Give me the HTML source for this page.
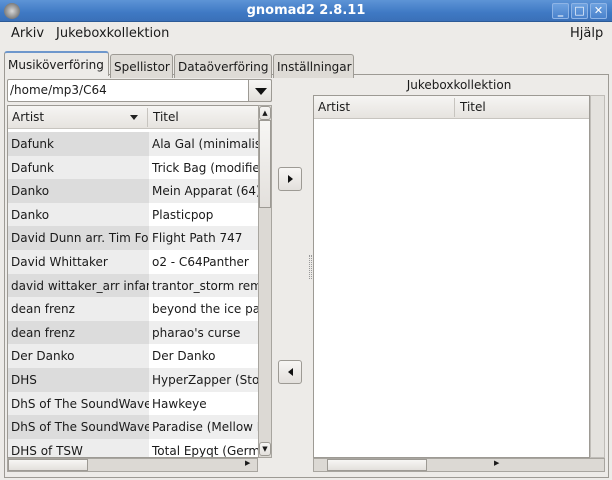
<!DOCTYPE html>
<html><head><meta charset="utf-8"><style>
*{box-sizing:border-box;margin:0;padding:0}
body{width:612px;height:480px;overflow:hidden;background:#edebe8;font-family:"DejaVu Sans","Liberation Sans",sans-serif;font-size:12px;color:#1a1a1a;position:relative}
.a{position:absolute}
.title{left:0;top:0;width:612px;height:22px;background:linear-gradient(#5d94d6,#3f79c4 60%,#3a70b8);border-bottom:1px solid #2c5a96}
.title .t{left:0;width:612px;top:3px;text-align:center;color:#fff;font-weight:bold;font-size:13px}
.wb{top:3px;width:17px;height:16px;border:1px solid #8eb4e6;border-radius:2px;background:linear-gradient(#6ea2e0,#4a82cc);color:#fff;font-weight:bold;font-size:11px;text-align:center;line-height:14px}
.tab{height:24px;border:1px solid #9d9a94;border-bottom:none;border-radius:3px 3px 0 0;background:#dedbd6;padding:5px 3px 0 3px;font-size:12px}
.list{background:#fff;border:1px solid #9d9a94}
.hdr{height:23px;background:linear-gradient(#f6f5f3,#e6e3df);border-bottom:1px solid #c7c4bf}
.row{height:23.6px;position:absolute;left:0;width:251px;line-height:24px}
.row span{position:absolute;top:0;height:100%;padding-left:3px;white-space:nowrap;overflow:hidden}
.c1{left:0;width:141px}.c2{left:141px;width:110px}
.vs{background:#dcd9d4;border:1px solid #a8a59f}
.btn{background:linear-gradient(#f7f6f4,#e3e0dc);border:1px solid #9d9a94;border-radius:3px}
</style></head><body>
<div class="a title">
 <div class="a" style="left:4px;top:3px;width:16px;height:16px;border-radius:50%;background:radial-gradient(#d8d8d8,#555);"></div>
 <div class="a t">gnomad2 2.8.11</div>
 <div class="a wb" style="left:552px">_</div>
 <div class="a wb" style="left:571px">□</div>
 <div class="a wb" style="left:590px">✕</div>
</div>
<div class="a" style="left:11px;top:26px;font-size:13px">Arkiv</div>
<div class="a" style="left:56px;top:26px;font-size:13px">Jukeboxkollektion</div>
<div class="a" style="left:570px;top:26px;font-size:13px">Hjälp</div>

<div class="a" style="left:4px;top:74px;width:605px;height:404px;border:1px solid #9d9a94;background:#edebe8"></div>
<div class="a tab" style="left:4px;top:51px;width:105px;height:25px;background:#edebe8;border-top:2px solid #6e97cc">Musiköverföring</div>
<div class="a tab" style="left:110px;top:54px;width:63px">Spellistor</div>
<div class="a tab" style="left:174px;top:54px;width:98px">Dataöverföring</div>
<div class="a tab" style="left:273px;top:54px;width:81px">Inställningar</div>

<div class="a" style="left:7px;top:79px;width:265px;height:23px;background:#fff;border:1px solid #9d9a94;border-radius:2px;padding:3px 2px;font-size:12px">/home/mp3/C64</div>
<div class="a btn" style="left:248px;top:79px;width:24px;height:23px;border-radius:0 2px 2px 0"><div class="a" style="left:6px;top:8px;border-left:6px solid transparent;border-right:6px solid transparent;border-top:7px solid #111"></div></div>

<div class="a list" style="left:7px;top:105px;width:252px;height:353px;overflow:hidden">
 <div class="a hdr" style="left:0;top:0;width:251px"></div>
 <div class="a" style="left:4px;top:4px">Artist</div>
 <div class="a" style="left:122px;top:9px;border-left:4px solid transparent;border-right:4px solid transparent;border-top:5px solid #222"></div>
 <div class="a" style="left:139px;top:2px;width:1px;height:19px;background:#c7c4bf"></div>
 <div class="a" style="left:145px;top:4px">Titel</div>
 <div class="a" style="left:0;top:26px;width:251px;height:330px">
  <div class="row" style="top:0"><span class="c1" style="background:#dcdcdc">Dafunk</span><span class="c2" style="background:#eeeeee">Ala Gal (minimalistic)</span></div>
  <div class="row" style="top:23.6px"><span class="c1" style="background:#ededed">Dafunk</span><span class="c2">Trick Bag (modified)</span></div>
  <div class="row" style="top:47.2px"><span class="c1" style="background:#dcdcdc">Danko</span><span class="c2" style="background:#eeeeee">Mein Apparat (64)</span></div>
  <div class="row" style="top:70.8px"><span class="c1" style="background:#ededed">Danko</span><span class="c2">Plasticpop</span></div>
  <div class="row" style="top:94.4px"><span class="c1" style="background:#dcdcdc">David Dunn arr. Tim Follin</span><span class="c2" style="background:#eeeeee">Flight Path 747</span></div>
  <div class="row" style="top:118px"><span class="c1" style="background:#ededed">David Whittaker</span><span class="c2">o2 - C64Panther</span></div>
  <div class="row" style="top:141.6px"><span class="c1" style="background:#dcdcdc">david wittaker_arr infan</span><span class="c2" style="background:#eeeeee">trantor_storm remix</span></div>
  <div class="row" style="top:165.2px"><span class="c1" style="background:#ededed">dean frenz</span><span class="c2">beyond the ice palace</span></div>
  <div class="row" style="top:188.8px"><span class="c1" style="background:#dcdcdc">dean frenz</span><span class="c2" style="background:#eeeeee">pharao's curse</span></div>
  <div class="row" style="top:212.4px"><span class="c1" style="background:#ededed">Der Danko</span><span class="c2">Der Danko</span></div>
  <div class="row" style="top:236px"><span class="c1" style="background:#dcdcdc">DHS</span><span class="c2" style="background:#eeeeee">HyperZapper (Stone)</span></div>
  <div class="row" style="top:259.6px"><span class="c1" style="background:#ededed">DhS of The SoundWave</span><span class="c2">Hawkeye</span></div>
  <div class="row" style="top:283.2px"><span class="c1" style="background:#dcdcdc">DhS of The SoundWave</span><span class="c2" style="background:#eeeeee">Paradise (Mellow Mix)</span></div>
  <div class="row" style="top:306.8px"><span class="c1" style="background:#ededed">DHS of TSW</span><span class="c2">Total Epyqt (German)</span></div>
 </div>
</div>
<div class="a vs" style="left:258px;top:105px;width:14px;height:353px"></div>
<div class="a btn" style="left:259px;top:106px;width:12px;height:14px;font-size:7px;text-align:center;line-height:12px">▲</div>
<div class="a btn" style="left:259px;top:442px;width:12px;height:14px;font-size:7px;text-align:center;line-height:12px">▼</div>
<div class="a btn" style="left:259px;top:120px;width:12px;height:88px;border-radius:0"></div>
<div class="a vs" style="left:7px;top:458px;width:251px;height:14px"></div>
<div class="a btn" style="left:8px;top:459px;width:80px;height:12px;border-radius:0"></div>
<div class="a" style="left:245px;top:459px;font-size:7px">▶</div>

<div class="a btn" style="left:278px;top:167px;width:24px;height:24px"><div class="a" style="left:9px;top:7px;border-top:4px solid transparent;border-bottom:4px solid transparent;border-left:5px solid #111"></div></div>
<div class="a btn" style="left:278px;top:360px;width:24px;height:24px"><div class="a" style="left:9px;top:7px;border-top:4px solid transparent;border-bottom:4px solid transparent;border-right:5px solid #111"></div></div>

<div class="a" style="left:313px;top:78px;width:292px;text-align:center;font-size:12px">Jukeboxkollektion</div>
<div class="a list" style="left:313px;top:95px;width:277px;height:363px">
 <div class="a hdr" style="left:0;top:0;width:275px"></div>
 <div class="a" style="left:4px;top:4px">Artist</div>
 <div class="a" style="left:140px;top:2px;width:1px;height:19px;background:#c7c4bf"></div>
 <div class="a" style="left:146px;top:4px">Titel</div>
</div>
<div class="a vs" style="left:590px;top:95px;width:15px;height:363px;background:#e4e2de;border-color:#c0bdb8"></div>
<div class="a vs" style="left:313px;top:458px;width:292px;height:14px"></div>
<div class="a btn" style="left:327px;top:459px;width:100px;height:12px;border-radius:0"></div>
<div class="a" style="left:494px;top:459px;font-size:7px">▶</div>
<div class="a" style="left:309px;top:255px;width:3px;height:24px;border-left:1px dotted #999;border-right:1px dotted #999"></div>
</body></html>
